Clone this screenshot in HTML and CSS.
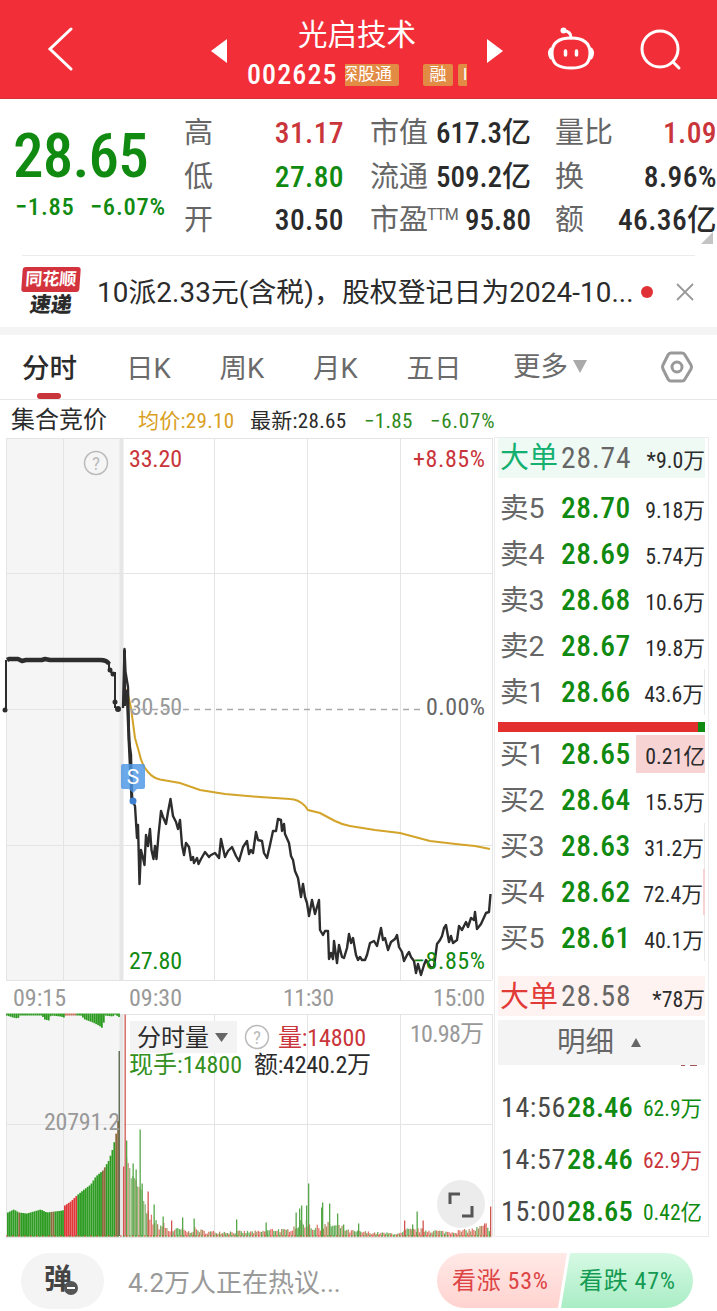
FILE: index.html
```html
<!DOCTYPE html>
<html lang="zh-cn">

<head>
    <meta charset="utf-8">
    <title>光启技术</title>
    <link rel="stylesheet" href="styles.css">
</head>

<body>
    <div class="header">
        <svg class="back" width="26" height="44" viewBox="0 0 26 44"><path d="M24 2 L3 22 L24 42" /></svg>
        <svg class="prev" width="16" height="24" viewBox="0 0 16 24"><path d="M16 0 V24 L0 12Z" /></svg>
        <div class="title">
            <h1>光启技术</h1>
            <div class="code">
                <span class="num">002625</span>
                <div class="tags"><i class="t1">深股通</i><i class="t2">融</i><i class="t3">I</i></div>
            </div>
        </div>
        <svg class="next" width="16" height="24" viewBox="0 0 16 24"><path d="M0 0 V24 L16 12Z" /></svg>
        <svg class="robot" width="48" height="44" viewBox="0 0 48 44">
            <path d="M24 11 C38 11 43 17 43 26 C43 37 37 41 24 41 C11 41 5 37 5 26 C5 17 10 11 24 11Z" />
            <path d="M24 11 C24 6 21 4 17 4" />
            <path d="M4 22 Q1 26 4 31 M44 22 Q47 26 44 31" />
            <path class="eye" d="M18.500 24 V28 M29.500 24 V28" />
            <circle class="dot" cx="16.500" cy="3.500" r="3" />
        </svg>
        <svg class="search" width="44" height="44" viewBox="0 0 44 44"><circle cx="21" cy="22" r="18" /><path d="M34 35 L40 41" /></svg>
    </div>

    <div class="quote">
        <div class="now">
            <b>28.65</b>
            <p><span>−1.85</span><span>−6.07%</span></p>
        </div>
        <dl class="c1">
            <dt>高</dt><dd class="red">31.17</dd>
            <dt>低</dt><dd class="green">27.80</dd>
            <dt>开</dt><dd>30.50</dd>
        </dl>
        <dl class="c2">
            <dt>市值</dt><dd>617.3亿</dd>
            <dt>流通</dt><dd>509.2亿</dd>
            <dt>市盈<sup>TTM</sup></dt><dd>95.80</dd>
        </dl>
        <dl class="c3">
            <dt>量比</dt><dd class="red">1.09</dd>
            <dt>换</dt><dd>8.96%</dd>
            <dt>额</dt><dd>46.36亿</dd>
        </dl>
        <i class="corner"></i>
    </div>

    <div class="news">
        <div class="logo"><b>同花顺</b><em>速递</em></div>
        <p>10派2.33元(含税)，股权登记日为2024-10...</p>
        <i class="point"></i>
        <svg width="18" height="18" viewBox="0 0 18 18"><path d="M1 1 L17 17 M17 1 L1 17" /></svg>
    </div>

    <div class="tabs">
        <span class="on">分时</span>
        <span>日K</span>
        <span>周K</span>
        <span>月K</span>
        <span>五日</span>
        <span class="more">更多<i></i></span>
        <svg width="34" height="34" viewBox="0 0 34 34"><path d="M10 3 H22 Q24 3 25 5 L31 15 Q32 17 31 19 L25 29 Q24 31 22 31 H11 Q9 31 8 29 L3 19 Q2 17 3 15 L8 5 Q9 3 11 3" /><circle cx="17" cy="17" r="5" /></svg>
    </div>

    <div class="info">
        <span class="i1">集合竞价</span>
        <span class="i2">均价:29.10</span>
        <span class="i3">最新:28.65</span>
        <span class="i4">−1.85</span>
        <span class="i5">−6.07%</span>
    </div>

    <div class="main">
        <div class="charts">
            <svg class="chart" width="494" height="576" viewBox="0 437 494 576">
                <rect class="auction" x="6" y="438" width="115" height="542" />
                <path class="grid" d="M6 438.500 H492 M6 573.500 H492 M6 709.500 H121 M6 845.500 H492 M6 980.500 H492 M6.500 438 V980 M63.500 438 V980 M214.500 438 V980 M307.500 438 V980 M400.500 438 V980 M492.500 438 V980" />
                <path class="split" d="M121.500 438 V980" />
                <path class="dash" d="M183 709.500 H424" />
                <g class="ask"><circle cx="96" cy="463" r="11.500" /><text x="96" y="470" text-anchor="middle">?</text></g>
                <text class="red" x="129" y="467" textLength="53">33.20</text>
                <text class="red" x="413" y="467" textLength="72">+8.85%</text>
                <path class="avg" d="M125 690 L127 690 L131 708 L135 738 L139 752 Q142 766 148 772 Q153 778 160 779.500 L180 783 L200 790 L225 794 L260 797 L290 799 Q298 799 305 806 L308 810 L320 813 L335 821 Q343 825 350 826 L375 830 L400 833 L415 837 L430 841 L460 844.500 L475 846 L490 849" />
                <text class="gray" x="130" y="715" textLength="52">30.50</text>
                <path class="strike" d="M130 709.500 H186" />
                <text class="dark" x="426" y="715" textLength="59">0.00%</text>
                <path class="open" d="M6 710 V660 M115 672 V708" />
                <path class="thick" d="M7 660 L9 659 H18 L22 661 L26 660 H42 L45 659 L50 660 H100 Q107 660 109 664" />
                <path class="open" d="M109 662 V670 L113 674 H115" />
                <g class="dots"><circle cx="5" cy="710" r="2.500" /><circle cx="110" cy="670" r="2.500" /><circle cx="113" cy="674" r="2.500" /><circle cx="115" cy="702" r="2.500" /><circle cx="118" cy="709" r="3" /></g>
                <path class="fast" d="M124.500 650 V706 M127 690 L129 740 L132 802" />
                <polyline class="price" points="123,708 124.500,649 125.500,672 128,687 129,740 131,755 132,800 135,806 137,838 138,825 139.500,884 141,850 143,858 144.500,865 146,835 148,846 150,829 151.500,850 153.500,859 155,846 156.500,859 158.500,835 161,811 163,817 166,824 168,812 170.500,799 173,816 176,822 178,829 180,820 182,845 184,855 186,843 189,847 191,860 193,857 194,863 197,858 198.500,864 201,859 205,852 209,857 211,855 215,853 219,858 221,839 225,857 228,851 232,847 236,856 239,861 243,847 247,841 249,854 251,850 253,853 256,832 258,840 262,841 264,853 267,858 270,845 273,831 276,831 278,819 281,820 282,831 284,824 285,834 289,843 291,856 293,860 295,871 298,878 301,897 303,884 305,897 307,903 309,916 312,900 315,914 319,900 320,930 323,935 325,931 328,931 329,959 331,953 333,959 334,941 337,963 339,945 342,957 344,958 347,948 349,934 351,943 353,938 356,955 358,960 360,957 362,960 365,960 367,955 370,943 374,941 377,946 379,937 381,928 383,940 385,938 388,950 391,942 395,939 397,935 399,947 402,952 404,961 407,955 409,952 411,957 414,961 416,973 418,964 421,975 424,965 426,960 431,968 434,967 437,944 440,940 442,936 444,928 446,925 449,942 451,936 453,943 457,940 459,926 462,930 466,922 468,927 471,918 474,920 475,912 477,929 481,924 486,913 489,912 490.500,894" />
                <g class="sell"><path d="M123 764 H143 Q145 764 145 766 V787 Q145 789 143 789 H137 L133 793 L129 789 H123 Q121 789 121 787 V766 Q121 764 123 764Z" /><circle cx="133" cy="801" r="3.500" /><text x="133" y="784" text-anchor="middle">S</text></g>
                <text class="green" x="129" y="969" textLength="53">27.80</text>
                <text class="green" x="413" y="969" textLength="72">−8.85%</text>
                <g class="time">
                    <text x="13" y="1006" textLength="53">09:15</text>
                    <text x="129" y="1006" textLength="53">09:30</text>
                    <text x="283" y="1006" textLength="51">11:30</text>
                    <text x="433" y="1006" textLength="52">15:00</text>
                </g>
            </svg>
            <svg class="chart" width="494" height="225" viewBox="0 1013 494 225">
                <rect class="auction" x="6" y="1014" width="115" height="223" />
                <path class="grid" d="M6 1014.500 H492 M6 1124.500 H492 M6 1237.500 H492 M6.500 1014 V1237 M63.500 1014 V1237 M214.500 1014 V1237 M307.500 1014 V1237 M400.500 1014 V1237 M492.500 1014 V1237" />
                <path class="split" d="M121.500 1014 V1237" />
                <g id="bars"></g>
                <text class="gray" x="44" y="1130" textLength="76">20791.2</text>
                <rect class="select" x="130" y="1021" width="107" height="32" />
                <text class="black cn" x="137" y="1046" textLength="72">分时量</text>
                <path class="arrow" d="M215 1033 H228 L221.500 1042Z" />
                <g class="ask"><circle cx="257" cy="1037" r="11.500" /><text x="257" y="1044" text-anchor="middle">?</text></g>
                <text class="red" x="278" y="1046" textLength="88">量:14800</text>
                <text class="gray" x="410" y="1042" textLength="74">10.98万</text>
                <text class="green2" x="129" y="1073" textLength="113">现手:14800</text>
                <text class="black" x="254" y="1073" textLength="117">额:4240.2万</text>
                <circle class="full" cx="461" cy="1204" r="24" />
                <path class="expand" d="M450 1204 V1194 H460 M472 1206 V1216 H462" />
            </svg>
        </div>
        <div class="side">
            <div class="row big sell-big"><span>大单</span><b>28.74</b><em>*9.0万</em></div>
            <div class="list">
                <div class="row"><span>卖5</span><b>28.70</b><em>9.18万</em></div>
                <div class="row"><span>卖4</span><b>28.69</b><em>5.74万</em></div>
                <div class="row"><span>卖3</span><b>28.68</b><em>10.6万</em></div>
                <div class="row"><span>卖2</span><b>28.67</b><em>19.8万</em></div>
                <div class="row tick"><span>卖1</span><b>28.66</b><em>43.6万</em></div>
            </div>
            <div class="ratio"></div>
            <div class="list">
                <div class="row hot"><span>买1</span><b>28.65</b><em>0.21亿</em></div>
                <div class="row"><span>买2</span><b>28.64</b><em>15.5万</em></div>
                <div class="row tick"><span>买3</span><b>28.63</b><em>31.2万</em></div>
                <div class="row tick pink"><span>买4</span><b>28.62</b><em>72.4万</em></div>
                <div class="row tick"><span>买5</span><b>28.61</b><em>40.1万</em></div>
            </div>
            <div class="row big buy-big"><span>大单</span><b>28.58</b><em>*78万</em></div>
            <div class="detail">明细<i></i></div>
            <div class="deals">
                <div class="deal"><span>14:56</span><b>28.46</b><em>62.9万</em></div>
                <div class="deal up"><span>14:57</span><b>28.46</b><em>62.9万</em></div>
                <div class="deal"><span>15:00</span><b>28.65</b><em>0.42亿</em></div>
            </div>
        </div>
    </div>

    <div class="footer">
        <div class="danmu">弹<i></i></div>
        <p>4.2万人正在热议...</p>
        <div class="vote">
            <span class="rise">看涨 53%</span>
            <span class="fall">看跌 47%</span>
        </div>
    </div>

    <script src="bars.js"></script>
</body>

</html>
```
FILE: styles.css
```css
body {
    margin: 0;
    width: 717px;
    height: 1311px;
    overflow: hidden;
    background: #fff;
    color: #2b2b2b;
    font-family: Roboto, "Noto Sans CJK SC", sans-serif;
    font-stretch: condensed;
}

h1, p, dl, dd {
    margin: 0;
}

i, em {
    font-style: normal;
}

svg {
    display: block;
    flex: none;
}

.red {
    color: #c9353a;
    fill: #c9353a;
}

.green {
    color: #108a10;
    fill: #108a10;
}

/* 顶部 */
.header {
    display: flex;
    align-items: center;
    height: 98px;
    background: #f22f39;
    border-bottom: 1px solid #d8323b;
    color: #fff;
}

.header svg {
    fill: none;
    stroke: #fff;
    stroke-width: 3;
    stroke-linecap: round;
}

.header .prev, .header .next {
    fill: #fff;
    stroke: none;
    margin-top: 4px;
}

.header .back {
    margin-left: 47px;
}

.header .prev {
    margin-left: 138px;
}

.title {
    width: 260px;
    height: 98px;
}

.title h1 {
    margin-top: 13px;
    font-size: 29.5px;
    line-height: 44px;
    font-weight: 400;
    text-align: center;
}

.code {
    display: flex;
    align-items: center;
    height: 34px;
    padding-left: 20px;
    margin-top: 1px;
}

.code .num {
    width: 98px;
    font-size: 28px;
    letter-spacing: 1.1px;
    font-weight: 500;
    line-height: 32px;
}

.tags {
    display: flex;
    width: 122px;
    height: 22px;
    overflow: hidden;
    font-size: 17px;
    line-height: 21px;
}

.tags i {
    flex: none;
    box-sizing: border-box;
    background: #e28b45;
    border-radius: 2px;
}

.tags .t1 {
    width: 56px;
    margin: 0 24px 0 -2px;
    text-indent: -2px;
}

.tags .t2 {
    width: 30px;
    margin-right: 5px;
    text-align: center;
}

.tags .t3 {
    width: 20px;
    padding-left: 5px;
}

.header .robot {
    margin-left: 44px;
}

.header .robot .eye {
    stroke-width: 3.500;
}

.header .robot .dot {
    fill: #fff;
    stroke: none;
}

.header .search {
    margin-left: 44px;
}

/* 报价 */
.quote {
    position: relative;
    display: flex;
    height: 143px;
    padding-top: 13px;
}

.now {
    width: 169px;
    padding-left: 15px;
    color: #108a10;
}

.now b {
    display: block;
    margin-top: 9px;
    font-size: 61px;
    line-height: 70px;
    font-weight: 500;
    letter-spacing: -.8px;
    margin-left: -2px;
    white-space: nowrap;
}

.now p {
    display: flex;
    font-size: 24.5px;
    font-weight: 500;
    letter-spacing: .8px;
    line-height: 32px;
}

.now span {
    width: 75px;
}

.quote dl {
    display: grid;
    grid-template-columns: auto auto;
    grid-auto-rows: 43.5px;
    justify-content: space-between;
    line-height: 43px;
    font-size: 29px;
    white-space: nowrap;
}

.quote dt {
    color: #666;
}

.quote dd {
    font-size: 29.500px;
    font-weight: 500;
    letter-spacing: .4px;
    text-align: right;
}

.quote sup {
    font-size: 16px;
    font-stretch: normal;
    line-height: 0;
    vertical-align: 10px;
    margin-left: -1px;
    letter-spacing: -.8px;
}

.c1 {
    width: 160px;
}

.quote .c2 {
    width: 161px;
    margin-left: 26px;
    grid-template-columns: 61px 100px;
}

.c2 dd {
    font-size: 29px;
    letter-spacing: 0;
}

.c3 {
    width: 162px;
    margin-left: 24px;
}

.corner {
    position: absolute;
    right: 4px;
    bottom: 11px;
    border-left: 12px solid transparent;
    border-bottom: 12px solid #c4c4c4;
}

/* 快讯 */
.news {
    display: flex;
    align-items: center;
    height: 71px;
    margin: 0 22px;
    border-top: 1px solid #ececec;
}

.logo {
    width: 58px;
    height: 49px;
    text-align: center;
    white-space: nowrap;
}

.logo b {
    display: block;
    height: 25px;
    border-radius: 3px;
    background: #d3333d;
    transform: skewX(-4deg);
    color: #fff;
    font-size: 17px;
    line-height: 24px;
}

.logo em {
    display: block;
    font-size: 21px;
    font-weight: 900;
    line-height: 26px;
    transform: skewX(-8deg);
}

.news p {
    width: 536px;
    margin-left: 17px;
    font-size: 27.8px;
    font-stretch: normal;
    letter-spacing: .1px;
    line-height: 40px;
    margin-top: 2px;
    white-space: nowrap;
}

.point {
    width: 12px;
    height: 12px;
    border-radius: 6px;
    margin: 0 23px 0 8px;
    background: #e03236;
}

.news svg {
    stroke: #999;
    stroke-width: 1.800;
}

/* 周期 */
.tabs {
    display: flex;
    align-items: center;
    height: 64px;
    padding-left: 22px;
    border-top: 8px solid #f4f4f4;
    border-bottom: 1px solid #e6e6e6;
    font-size: 27.5px;
    font-stretch: normal;
    line-height: 68px;
    color: #6b6b6b;
}

.tabs span {
    width: 93.5px;
    height: 64px;
}

.tabs .on {
    position: relative;
    width: 104px;
    font-weight: 500;
    color: #2b2b2b;
}

.tabs .on::after {
    content: "";
    position: absolute;
    left: 15px;
    bottom: 0;
    width: 24px;
    height: 6px;
    border-radius: 3px;
    background: #c9333a;
}

.tabs .more {
    display: flex;
    align-items: center;
    width: 147px;
    height: 68px;
    margin-left: 13px;
}

.more i {
    margin: -2px 0 0 5px;
    border: 7.500px solid transparent;
    border-top: 13px solid #aaa;
    border-bottom: 0;
}

.tabs svg {
    fill: none;
    stroke: #999;
    stroke-width: 3;
}

.info {
    display: flex;
    align-items: baseline;
    height: 37px;
    padding: 2px 0 0 11px;
    box-sizing: border-box;
    font-size: 21px;
    line-height: 37px;
    white-space: nowrap;
    letter-spacing: .3px;
}

.info .i1 {
    width: 127px;
    font-size: 24px;
    letter-spacing: 0;
}

.info .i2 {
    width: 112px;
    color: #d9a01f;
}

.info .i3 {
    width: 114px;
}

.info .i4 {
    width: 66px;
    color: #2f8b20;
}

.info .i5 {
    letter-spacing: .8px;
    color: #2f8b20;
}

/* 图表 */
.main {
    display: flex;
    height: 801px;
}

.chart text {
    font-size: 24px;
}

.auction {
    fill: #f5f5f5;
}

.grid {
    stroke: #e4e4e4;
}

.split {
    stroke: #e6e6e6;
    stroke-width: 4;
}

.dash, .strike {
    stroke: #aaa;
    stroke-width: 1.500;
    stroke-dasharray: 6 5;
}

.gray, .time {
    fill: #999;
}

.dark {
    fill: #666;
}

.black {
    fill: #2b2b2b;
}

.green2 {
    fill: #338f20;
}

.ask circle {
    fill: none;
    stroke: #bbb;
    stroke-width: 1.500;
}

.chart .ask text {
    font-size: 19px;
    fill: #bbb;
}

.avg {
    fill: none;
    stroke: #d3a429;
    stroke-width: 2;
}

.price, .thick, .open, .fast {
    fill: none;
    stroke: #2d2d2d;
    stroke-width: 2.400;
    stroke-linejoin: round;
}

.open {
    stroke-width: 2;
}

.fast {
    stroke-width: 3;
}

.thick {
    stroke-width: 4.500;
}

.dots {
    fill: #2d2d2d;
}

.sell path {
    fill: #4c96e6;
    fill-opacity: .82;
}

.sell circle {
    fill: #3d7fd0;
}

.chart .sell text {
    fill: #fff;
    font-size: 21px;
    font-stretch: normal;
}

.select {
    fill: #f3f3f3;
}

.arrow {
    fill: #666;
}

.full {
    fill: #ececec;
}

.expand {
    fill: none;
    stroke: #555;
    stroke-width: 3;
}

/* 盘口 */
.side {
    box-sizing: border-box;
    width: 215px;
    height: 800px;
    padding: 0 3px;
    border: 1px solid #ececec;
}

.row {
    display: grid;
    grid-template-columns: 61px 74px 72px;
    align-items: center;
    height: 46px;
    line-height: 48px;
}

.row span {
    height: 46px;
    padding-left: 2px;
    font-size: 28.5px;
    font-stretch: normal;
    color: #666;
}

.row b {
    height: 46px;
    padding-left: 2px;
    font-size: 29.500px;
    font-weight: 500;
    letter-spacing: .5px;
    line-height: 46px;
    color: #108a10;
}

.row em {
    font-size: 21.800px;
    text-align: right;
    white-space: nowrap;
    padding-top: 2px;
    box-sizing: border-box;
    height: 46px;
}

.big {
    height: 40px;
    line-height: 41px;
}

.big span {
    height: 40px;
    font-size: 29px;
}

.big b {
    height: 40px;
    line-height: 40px;
    font-weight: 400;
    letter-spacing: .9px;
    color: #666;
}

.big em {
    height: 40px;
}

.sell-big {
    background: #effaf5;
    margin-bottom: 7px;
}

.sell-big span {
    color: #14b070;
}

.buy-big {
    margin-top: 15px;
    background: #fff3f2;
    line-height: 43px;
}

.buy-big span {
    color: #e23a36;
}

.ratio {
    height: 10px;
    margin-top: 7px;
    margin-bottom: -1px;
    background: linear-gradient(90deg, #e3302e 200px, #108a10 200px);
}

.hot em {
    height: 38px;
    line-height: 40px;
    padding-top: 2px;
    margin-left: 3px;
    background: #f8d3d4;
}

.tick em {
    border-right: 1px solid #e9e9e9;
}

.pink em {
    border-right: 2px solid #f8d3d4;
}

.detail {
    display: flex;
    align-items: center;
    height: 45px;
    margin-top: 4px;
    padding-left: 59px;
    background: #f4f4f4;
    color: #666;
    font-size: 28.500px;
    line-height: 48px;
}

.detail i {
    margin-left: 17px;
    border: 5.500px solid transparent;
    border-bottom: 9px solid #666;
    border-top: 0;
}

/* 被明细栏盖住的上一行 */
.deals::before {
    content: "";
    display: block;
    height: 1px;
    margin: 0 8px 14px 183px;
    background: linear-gradient(90deg, #a55 4px, transparent 4px 9px, #a55 9px);
}

.deal {
    display: grid;
    grid-template-columns: 69px 72px 63px;
    height: 52px;
    line-height: 55px;
    color: #108a10;
}

.deal span {
    padding-left: 3px;
    font-size: 28px;
    letter-spacing: .6px;
    color: #4a4a4a;
}

.deal b {
    font-size: 28.5px;
    font-weight: 500;
    letter-spacing: .2px;
}

.deal em {
    font-size: 21.5px;
    text-align: right;
    padding-top: 1px;
}

.up em {
    color: #c9353a;
}

/* 底部 */
.footer {
    display: flex;
    align-items: center;
    height: 73px;
    padding: 12px 0 0 21px;
    box-sizing: border-box;
}

.danmu {
    position: relative;
    width: 83px;
    height: 56px;
    border-radius: 28px;
    background: #f4f4f4;
    color: #444;
    font-size: 28px;
    font-weight: 700;
    line-height: 54px;
    text-indent: 23px;
}

.danmu i {
    position: absolute;
    left: 43px;
    top: 28px;
    box-sizing: border-box;
    width: 14px;
    height: 14px;
    border-radius: 7px;
    background: linear-gradient(#fff, #fff) 50% 50% / 8px 2px no-repeat #555;
}

.footer p {
    width: 309px;
    margin-left: 24px;
    font-size: 26px;
    font-stretch: normal;
    color: #999;
    white-space: nowrap;
}

.vote {
    display: flex;
    width: 256px;
    height: 55px;
    border-radius: 28px;
    overflow: hidden;
    font-size: 24px;
    line-height: 57px;
    white-space: nowrap;
    letter-spacing: .7px;
}

.rise {
    width: 130px;
    padding-left: 15px;
    box-sizing: border-box;
    color: #dd4545;
    background: linear-gradient(#ffe9e7, #ffd3cf);
    clip-path: polygon(0 0, 100% 0, calc(100% - 9px) 100%, 0 100%);
}

.fall {
    width: 132px;
    margin-left: -6px;
    padding-left: 18px;
    box-sizing: border-box;
    color: #149a52;
    background: linear-gradient(#d6f9e4, #a9edc4);
    clip-path: polygon(9px 0, 100% 0, 100% 100%, 0 100%);
}
```
FILE: bars.js
```js
var g = document.getElementById('bars');
var bottom = 1236.5;
var green = '#2e9c22', red = '#e0383a', brown = '#8c6a3c';

function bar(x, y, w, h, color) {
    var r = document.createElementNS('http://www.w3.org/2000/svg', 'rect');
    r.setAttribute('x', x);
    r.setAttribute('y', y);
    r.setAttribute('width', w);
    r.setAttribute('height', h);
    r.setAttribute('fill', color);
    g.appendChild(r);
}

// 关键点之间线性取值
function level(keys, x) {
    for (var i = 1; i < keys.length; i++) {
        if (x <= keys[i][0]) {
            var a = keys[i - 1], b = keys[i];
            return a[1] + (b[1] - a[1]) * (x - a[0]) / (b[0] - a[0]);
        }
    }
    return keys[keys.length - 1][1];
}

var seed = 7;
function rand() {
    seed = (seed * 16807) % 2147483647;
    return seed / 2147483647;
}

// 集合竞价
var auction = [[7, 24], [13, 27], [18, 24], [26, 23], [40, 27], [46, 24], [62, 26], [64, 31], [70, 35], [76, 41], [82, 46], [90, 52], [95, 60], [102, 66], [108, 76], [112, 88], [116, 106], [118, 122]];
for (var x = 7; x < 119; x += 1.9) {
    var c = green;
    if (x > 63 && x < 76) c = red;
    if ((x > 17 && x < 20) || (x > 49 && x < 54) || (x > 102 && x < 104) || x > 115) c = brown;
    var h = level(auction, x);
    bar(x, bottom - h, 1.8, h, c);
}
bar(118.5, 1051, 1.5, 185, '#66705a');

// 未匹配量
var top1 = [[6, 2], [12, 4], [17, 5], [19, 2], [41, 2], [44, 6], [48, 7], [50, 2], [60, 3], [63, 4], [65, 2], [80, 2], [84, 6], [92, 9], [98, 12], [102, 15], [104, 2], [112, 3], [114, 1], [119, 4]];
for (x = 6; x < 119; x += 1.9) {
    bar(x, 1013.5, 1.8, level(top1, x), x > 63 && x < 76 ? '#c8705c' : green);
}

// 分时成交量
var base = [[126, 88], [130, 62], [134, 58], [138, 50], [142, 44], [146, 24], [152, 19], [157, 12], [164, 12], [168, 6], [180, 8], [188, 5], [194, 8], [205, 5], [260, 5], [275, 8], [285, 6], [294, 11], [300, 14], [307, 16], [313, 9], [330, 13], [340, 10], [347, 6], [375, 4], [400, 3], [406, 7], [425, 7], [445, 5], [462, 6], [475, 8], [486, 12], [488, 5]];
for (x = 126; x < 489; x += 1.55) {
    h = level(base, x) * (x < 146 ? .9 + rand() * .15 : .55 + rand() * .65);
    var k = rand();
    c = k < .4 ? '#e0746a' : k < .75 ? '#62ac55' : '#b28a5c';
    if (x < 145) c = k < .45 ? '#c99076' : '#8db779';
    bar(x, bottom - h, 1.25, h, c);
}
var peaks = [[123, 70, 1], [124.5, 222, 1], [126, 96, 0], [132.5, 73, 0], [135.5, 67, 0], [139.5, 107, 0], [141.5, 53, 0], [147.5, 45, 1], [153.5, 32, 0], [162.5, 20, 0], [171, 16, 1], [182, 19, 0], [193.5, 18, 0], [236, 17, 0], [265.5, 14, 0], [295.5, 24, 0], [299, 28, 0], [301, 31, 0], [306, 31, 0], [308, 53, 0], [321, 29, 0], [322, 34, 0], [329, 33, 0], [337, 23, 0], [343, 12, 0], [358, 13, 0], [404, 16, 1], [412, 12, 0], [416.5, 25, 0], [422.5, 16, 1], [484, 13, 1], [490, 30, 1]];
for (var i = 0; i < peaks.length; i++) {
    bar(peaks[i][0], bottom - peaks[i][1], 1.3, peaks[i][1], peaks[i][2] ? '#cf5650' : '#55a748');
}
for (x = 6; x < 490; x += 3) {
    bar(x, 1235.5, 1.6, 1, x % 2 ? green : red);
}
```
